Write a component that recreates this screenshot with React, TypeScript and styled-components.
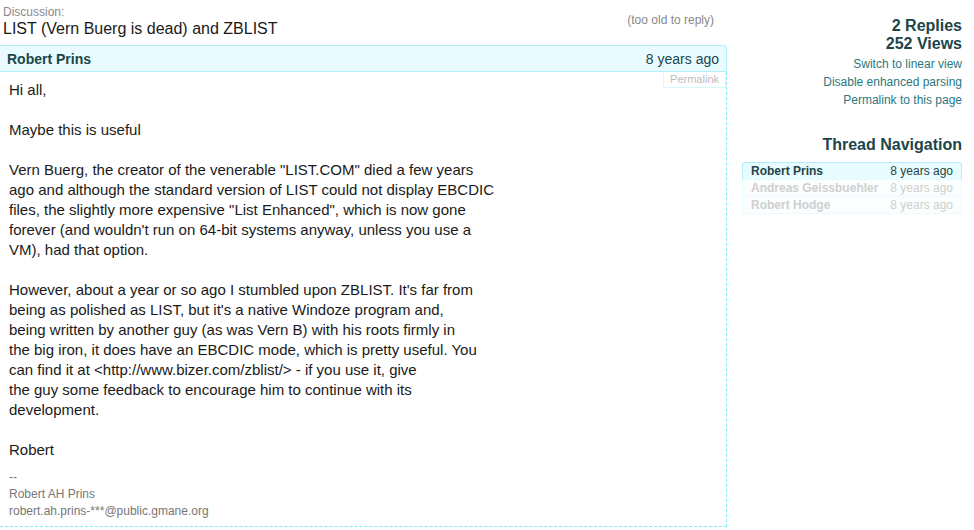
import React from "react";
import styled, { createGlobalStyle } from "styled-components";

const Global = createGlobalStyle`
  html, body { margin: 0; padding: 0; background: #fff; }
  body { font-family: "Liberation Sans", Arial, Helvetica, sans-serif; color: #222; }
`;

const Page = styled.div`
  display: flex;
  align-items: flex-start;
  width: 974px;
`;

const Main = styled.div`
  width: 727px;
  flex: none;
`;

const TopRow = styled.div`
  display: flex;
  justify-content: space-between;
  align-items: flex-start;
  padding: 5px 13px 0 3px;
  height: 40px;
`;

const Label = styled.div`
  font-size: 12px;
  line-height: 14px;
  color: #8a8a8a;
`;

const Title = styled.h1`
  margin: 0;
  font-size: 16px;
  font-weight: normal;
  line-height: 19px;
  color: #1a1a1a;
`;

const TooOld = styled.div`
  font-size: 12px;
  line-height: 14px;
  color: #888;
  padding-top: 8px;
`;

const Post = styled.div``;

const PostHeader = styled.div`
  display: flex;
  justify-content: space-between;
  align-items: center;
  height: 25px;
  padding: 0 7px;
  background: #e8fbfe;
  border: 1px solid #b2effa;
  border-left: none;
  border-radius: 0 3px 0 0;
  font-size: 14px;
  color: #1c454a;
`;

const Author = styled.span`
  font-weight: bold;
`;

const PostBody = styled.div`
  border-right: 1px dashed #7fe7f6;
  border-bottom: 1px dashed #7fe7f6;
  padding: 8px 0 6px 9px;
`;

const Permalink = styled.a`
  float: right;
  font-size: 11px;
  line-height: 15px;
  color: #bdbdbd;
  padding: 0 6px;
  margin-top: -8px;
  border: 1px solid #d6f8fd;
  border-top: none;
  border-radius: 0 0 0 2px;
  text-decoration: none;
`;

const Para = styled.p`
  margin: 0 0 20px;
  font-size: 15px;
  line-height: 20px;
  color: #1a1a1a;
  white-space: pre-line;
`;

const Signature = styled.div`
  margin-top: -11px;
  font-size: 12px;
  line-height: 17px;
  color: #777;
  white-space: pre-line;
`;

const Sidebar = styled.aside`
  flex: 1;
  margin-left: 15px;
  padding: 17px 12px 0 0;
  text-align: right;
`;

const Stat = styled.div`
  font-size: 16px;
  font-weight: bold;
  line-height: 18px;
  color: #1c454a;
`;

const Links = styled.div`
  margin-top: 2px;
  display: flex;
  flex-direction: column;
  align-items: flex-end;
`;

const SideLink = styled.a`
  font-size: 12px;
  line-height: 18px;
  color: #2a7880;
  text-decoration: none;
`;

const NavTitle = styled.h2`
  margin: 27px 0 8px;
  font-size: 16px;
  font-weight: bold;
  line-height: 18px;
  color: #1c454a;
`;

const NavList = styled.div`
  display: flex;
  flex-direction: column;
`;

const NavRow = styled.div<{ $active?: boolean }>`
  display: flex;
  justify-content: space-between;
  height: 16px;
  align-items: center;
  padding: 0 8px;
  font-size: 12px;
  background: ${(p) => (p.$active ? "#e8fbfe" : "#fbfeff")};
  border: 1px solid ${(p) => (p.$active ? "#b2effa" : "#eafbfe")};
  border-radius: ${(p) => (p.$active ? "2px" : "0")};
  margin-top: ${(p) => (p.$active ? "0" : "-1px")};
  color: ${(p) => (p.$active ? "#1c454a" : "#cfcfcf")};
`;

const NavName = styled.span`
  font-weight: bold;
`;

const NavDate = styled.span``;

const paragraphs = [
  "Hi all,",
  "Maybe this is useful",
  `Vern Buerg, the creator of the venerable "LIST.COM" died a few years
ago and although the standard version of LIST could not display EBCDIC
files, the slightly more expensive "List Enhanced", which is now gone
forever (and wouldn't run on 64-bit systems anyway, unless you use a
VM), had that option.`,
  `However, about a year or so ago I stumbled upon ZBLIST. It's far from
being as polished as LIST, but it's a native Windoze program and,
being written by another guy (as was Vern B) with his roots firmly in
the big iron, it does have an EBCDIC mode, which is pretty useful. You
can find it at <http://www.bizer.com/zblist/> - if you use it, give
the guy some feedback to encourage him to continue with its
development.`,
  "Robert",
];

const nav = [
  { name: "Robert Prins", active: true },
  { name: "Andreas Geissbuehler" },
  { name: "Robert Hodge" },
];

export default function App() {
  return (
    <>
      <Global />
      <Page>
        <Main>
          <TopRow>
            <div>
              <Label>Discussion:</Label>
              <Title>LIST (Vern Buerg is dead) and ZBLIST</Title>
            </div>
            <TooOld>(too old to reply)</TooOld>
          </TopRow>
          <Post>
            <PostHeader>
              <Author>Robert Prins</Author>
              <span>8 years ago</span>
            </PostHeader>
            <PostBody>
              <Permalink href="#">Permalink</Permalink>
              {paragraphs.map((p, i) => (
                <Para key={i}>{p}</Para>
              ))}
              <Signature>{`--
Robert AH Prins
robert.ah.prins-***@public.gmane.org`}</Signature>
            </PostBody>
          </Post>
        </Main>
        <Sidebar>
          <Stat>2 Replies</Stat>
          <Stat>252 Views</Stat>
          <Links>
            <SideLink href="#">Switch to linear view</SideLink>
            <SideLink href="#">Disable enhanced parsing</SideLink>
            <SideLink href="#">Permalink to this page</SideLink>
          </Links>
          <NavTitle>Thread Navigation</NavTitle>
          <NavList>
            {nav.map((n) => (
              <NavRow key={n.name} $active={n.active}>
                <NavName>{n.name}</NavName>
                <NavDate>8 years ago</NavDate>
              </NavRow>
            ))}
          </NavList>
        </Sidebar>
      </Page>
    </>
  );
}
